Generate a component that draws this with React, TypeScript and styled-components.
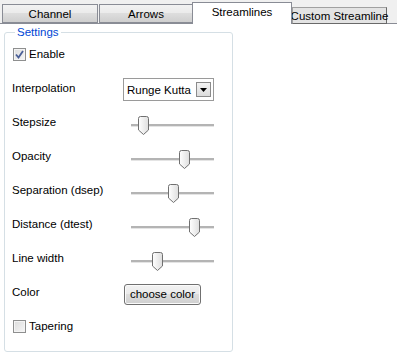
import React from "react";
import styled, { createGlobalStyle } from "styled-components";

const GlobalStyle = createGlobalStyle`
  body {
    margin: 0;
    background: #ffffff;
    font-family: "Liberation Sans", Arial, sans-serif;
    font-size: 11.5px;
    color: #000;
  }
`;

const Window = styled.div`
  width: 397px;
  height: 357px;
  background: #ffffff;
  overflow: hidden;
`;

const TabBar = styled.div`
  display: flex;
  align-items: flex-end;
  height: 23px;
  padding-left: 1px;
  background: #f0f0f0;
  border-bottom: 1px solid #898c95;
`;

const Tab = styled.div<{ $width: number; $active?: boolean }>`
  box-sizing: border-box;
  width: ${({ $width }) => $width}px;
  height: ${({ $active }) => ($active ? 22 : 19)}px;
  margin-bottom: ${({ $active }) => ($active ? -1 : 0)}px;
  margin-left: 1px;
  display: flex;
  align-items: center;
  justify-content: center;
  white-space: nowrap;
  padding-bottom: ${({ $active }) => ($active ? 4 : 0)}px;
  border: 1px solid #898c95;
  border-bottom: ${({ $active }) => ($active ? "none" : "1px solid #898c95")};
  background: ${({ $active }) =>
    $active ? "#ffffff" : "linear-gradient(#f2f2f2 0%, #ebebeb 45%, #dddddd 50%, #cfcfcf 100%)"};
  z-index: ${({ $active }) => ($active ? 1 : 0)};
`;

const PlainTab = styled.div`
  box-sizing: border-box;
  width: 95px;
  height: 17px;
  margin-bottom: -1px;
  display: flex;
  align-items: center;
  justify-content: center;
  white-space: nowrap;
  background: #e3e3e3;
  border: 1px solid #a0a0a0;
  border-right-color: #696969;
  border-bottom-color: #696969;
`;

const Pane = styled.div`
  padding: 1px 0 0 4px;
`;

const GroupBox = styled.fieldset`
  box-sizing: border-box;
  width: 229px;
  height: 327px;
  margin: 0;
  padding: 0 0 0 7px;
  border: 1px solid #d5dfe5;
  border-radius: 3px;
`;

const Legend = styled.legend`
  margin-left: 3px;
  padding: 0 2px;
  color: #0046d5;
  font-size: 11.5px;
  line-height: 14px;
`;

const Form = styled.div`
  display: grid;
  grid-template-columns: 110px 1fr;
  grid-auto-rows: 34px;
  align-items: center;
  margin-top: -2px;
`;

const Label = styled.div`
  line-height: 14px;
  white-space: nowrap;
`;

const CheckRow = styled.label`
  grid-column: 1 / span 2;
  display: flex;
  align-items: center;
  gap: 3px;
  margin-left: 1px;
`;

const Box = styled.span`
  box-sizing: border-box;
  width: 13px;
  height: 13px;
  border: 1px solid #8e8f8f;
  background: linear-gradient(135deg, #dcdcdc, #f6f6f6);
  box-shadow: inset 0 0 0 1px #f4f4f4;
  display: flex;
  align-items: center;
  justify-content: center;
`;

const Combo = styled.div`
  box-sizing: border-box;
  width: 91px;
  height: 23px;
  margin: 3px 0 0 1px;
  display: flex;
  align-items: center;
  justify-content: space-between;
  padding: 0 2px 0 3px;
  border: 1px solid #9a9a9a;
  background: #ffffff;
  white-space: nowrap;
`;

const ComboButton = styled.span`
  box-sizing: border-box;
  width: 15px;
  height: 15px;
  display: flex;
  align-items: center;
  justify-content: center;
  border: 1px solid #8b8b8b;
  background: linear-gradient(#f4f4f4, #dcdcdc);
`;

const SliderWrap = styled.div`
  position: relative;
  width: 83px;
  height: 20px;
  margin: 12px 0 0 9px;
`;

const Track = styled.div`
  position: absolute;
  left: 0;
  right: 0;
  top: 6px;
  height: 2px;
  background: #b4b4b4;
  border-bottom: 1px solid #e4e4e4;
`;

const Thumb = styled.svg`
  position: absolute;
  top: -2px;
`;

const Button = styled.button`
  box-sizing: border-box;
  width: 77px;
  height: 21px;
  margin: 4px 0 0 2px;
  padding: 0;
  border: 1px solid #707070;
  border-radius: 3px;
  font-family: inherit;
  font-size: 11.5px;
  color: #000;
  background: linear-gradient(#f2f2f2 0%, #ebebeb 45%, #dddddd 50%, #cfcfcf 100%);
  box-shadow: inset 0 0 0 1px #fbfbfb;
`;

const CheckBox = ({ checked }: { checked?: boolean }) => (
  <Box>
    {checked && (
      <svg width="9" height="9" viewBox="0 0 9 9">
        <path d="M1 4.5 L3.5 7.5 L8 1" fill="none" stroke="#4a5f97" strokeWidth="1.8" />
      </svg>
    )}
  </Box>
);

const Slider = ({ pos }: { pos: number }) => (
  <SliderWrap>
    <Track />
    <Thumb style={{ left: pos - 5.5 }} width="12" height="20" viewBox="0 0 12 20">
      <defs>
        <linearGradient id="thumbFill" x1="0" x2="1" y1="0" y2="0">
          <stop offset="0" stopColor="#ffffff" />
          <stop offset="1" stopColor="#dedede" />
        </linearGradient>
      </defs>
      <path
        d="M0.5 2.5 Q0.5 0.5 2.5 0.5 H8.5 Q10.5 0.5 10.5 2.5 V14 L5.5 18.5 L0.5 14 Z"
        fill="url(#thumbFill)"
        stroke="#707070"
      />
    </Thumb>
  </SliderWrap>
);

const sliders = [
  { label: "Stepsize", pos: 12 },
  { label: "Opacity", pos: 53 },
  { label: "Separation (dsep)", pos: 42 },
  { label: "Distance (dtest)", pos: 63 },
  { label: "Line width", pos: 26 },
];

export default function App() {
  return (
    <Window>
      <GlobalStyle />
      <TabBar>
        <Tab $width={96}>Channel</Tab>
        <Tab $width={94}>Arrows</Tab>
        <Tab $width={100} $active style={{ marginLeft: -1 }}>
          Streamlines
        </Tab>
        <PlainTab>Custom Streamline</PlainTab>
      </TabBar>
      <Pane>
        <GroupBox>
          <Legend>Settings</Legend>
          <Form>
            <CheckRow>
              <CheckBox checked />
              Enable
            </CheckRow>
            <Label>Interpolation</Label>
            <Combo>
              <span>Runge Kutta</span>
              <ComboButton>
                <svg width="7" height="4" viewBox="0 0 7 4">
                  <path d="M0 0 H7 L3.5 4 Z" fill="#000" />
                </svg>
              </ComboButton>
            </Combo>
            {sliders.map((s) => (
              <React.Fragment key={s.label}>
                <Label>{s.label}</Label>
                <Slider pos={s.pos} />
              </React.Fragment>
            ))}
            <Label>Color</Label>
            <Button>choose color</Button>
            <CheckRow>
              <CheckBox />
              Tapering
            </CheckRow>
          </Form>
        </GroupBox>
      </Pane>
    </Window>
  );
}
